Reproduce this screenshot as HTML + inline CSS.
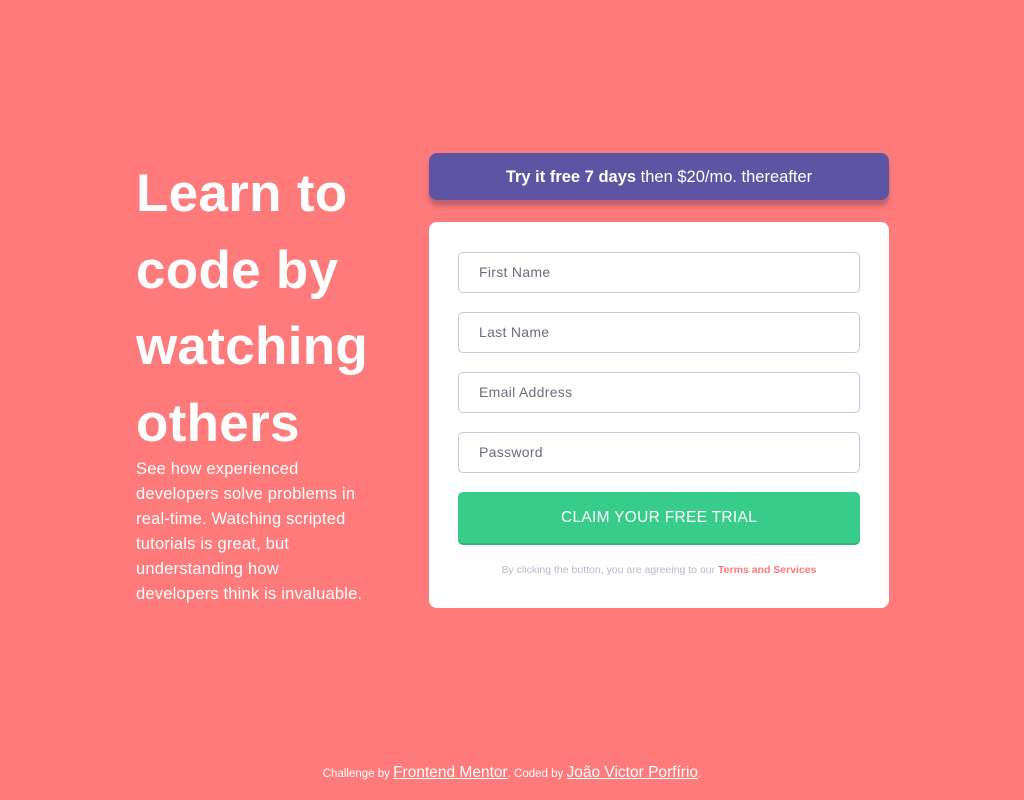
<!DOCTYPE html>
<html><head><meta charset="utf-8"><style>
*{box-sizing:border-box;margin:0;padding:0}
html,body{width:1024px;height:800px;overflow:hidden}
body{background:#ff7a7a;font-family:"Liberation Sans",sans-serif;position:relative;color:#fff}
h1{position:absolute;left:136px;top:156px;width:270px;font-size:53px;line-height:76.5px;font-weight:700;letter-spacing:0.3px}
.p{position:absolute;left:136px;top:457px;width:260px;font-size:16.5px;line-height:25px;letter-spacing:.2px;white-space:nowrap}
.banner{position:absolute;left:429px;top:153px;width:460px;height:47px;background:#5e54a4;border-radius:8px;box-shadow:0 6px 4px rgba(60,40,80,.3);text-align:center;line-height:49px;font-size:16.5px}
.card{position:absolute;left:429px;top:222px;width:460px;height:386px;background:#fff;border-radius:8px}
.in{position:absolute;left:29px;width:402px;height:41px;border:1px solid #c9c6e0;border-radius:5px;font-size:14px;color:#6e6c80;padding-left:20px;line-height:39px;letter-spacing:.3px}
.btn{position:absolute;left:29px;top:270px;width:402px;height:51px;background:#38cc8b;border-radius:5px;box-shadow:0 2px 0 #31b87c;text-align:center;line-height:52px;font-size:15.5px;letter-spacing:.3px}
.terms{position:absolute;left:0;top:342px;width:460px;text-align:center;font-size:10.5px;color:#bab7d4}
.terms b{color:#ff7a7a}
.foot{position:absolute;left:0;top:764px;width:1024px;text-align:center;font-size:11.5px}
.foot u{font-size:15.5px}
</style></head><body>
<h1>Learn to code by watching others</h1>
<div class="p">See how experienced<br>developers solve problems in<br>real-time. Watching scripted<br>tutorials is great, but<br>understanding how<br>developers think is invaluable.</div>
<div class="banner"><b>Try it free 7 days</b> then $20/mo. thereafter</div>
<div class="card">
<div class="in" style="top:30px">First Name</div>
<div class="in" style="top:90px">Last Name</div>
<div class="in" style="top:150px">Email Address</div>
<div class="in" style="top:210px">Password</div>
<div class="btn">CLAIM YOUR FREE TRIAL</div>
<div class="terms">By clicking the button, you are agreeing to our <b>Terms and Services</b></div>
</div>
<div class="foot">Challenge by <u>Frontend Mentor</u>. Coded by <u>João Victor Porfírio</u>.</div>
</body></html>
